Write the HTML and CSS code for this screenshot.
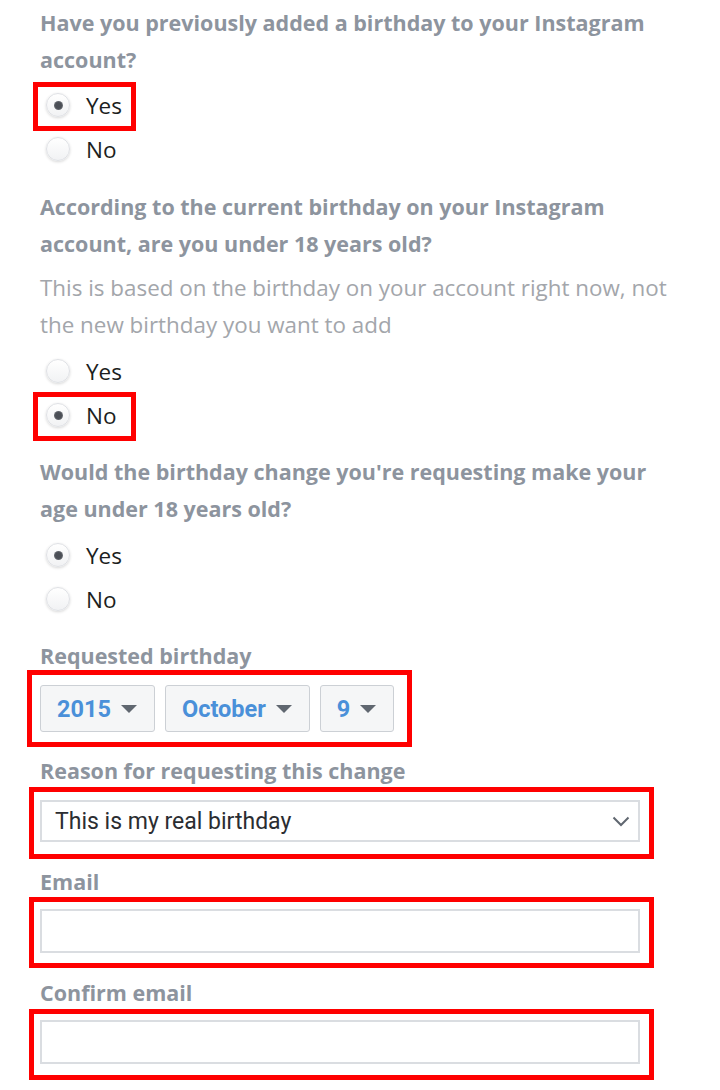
FILE: index.html
```html
<!DOCTYPE html>
<html lang="en">
<head>
<meta charset="utf-8">
<title>Birthday change request</title>
<link rel="stylesheet" href="styles.css">
</head>
<body>
<main class="form">
  <p class="question q1">Have you previously added a birthday to your Instagram account?</p>
  <div class="radios radios-first">
    <div class="radio-row hl-radio"><span class="radio checked"></span><span class="radio-label">Yes</span></div>
    <div class="radio-row"><span class="radio"></span><span class="radio-label">No</span></div>
  </div>

  <p class="question q2">According to the current birthday on your Instagram account, are you under 18 years old?</p>
  <p class="helper">This is based on the birthday on your account right now, not the new birthday you want to add</p>
  <div class="radios">
    <div class="radio-row"><span class="radio"></span><span class="radio-label">Yes</span></div>
    <div class="radio-row hl-radio"><span class="radio checked"></span><span class="radio-label">No</span></div>
  </div>

  <p class="question q3">Would the birthday change you're requesting make your age under 18 years old?</p>
  <div class="radios">
    <div class="radio-row"><span class="radio checked"></span><span class="radio-label">Yes</span></div>
    <div class="radio-row"><span class="radio"></span><span class="radio-label">No</span></div>
  </div>

  <p class="label label-first">Requested birthday</p>
  <div class="date-row hl-date">
    <div class="date-select"><span>2015</span><i class="tri"></i></div>
    <div class="date-select"><span>October</span><i class="tri"></i></div>
    <div class="date-select"><span>9</span><i class="tri"></i></div>
  </div>

  <p class="label label-reason">Reason for requesting this change</p>
  <div class="select hl-wide">
    <span>This is my real birthday</span>
    <svg class="chev" width="18" height="11" viewBox="0 0 18 11"><path d="M1.5 1.5 L9 9 L16.5 1.5" fill="none" stroke="#606770" stroke-width="2"/></svg>
  </div>

  <p class="label label-field">Email</p>
  <div class="input hl-wide"></div>

  <p class="label label-field">Confirm email</p>
  <div class="input hl-wide hl-last"></div>
</main>
</body>
</html>
```

FILE: styles.css
```css
html, body {
  margin: 0;
  padding: 0;
  background: #ffffff;
}

.form {
  padding: 4px 0 26px 40px;
  width: 636px;
  font-family: "Open Sans", Lato, sans-serif;
}

.question, .label {
  margin: 0;
  font-weight: 700;
  font-size: 21.5px;
  line-height: 37px;
  color: #8d949e;
}

.q2 {
  margin-top: 17px;
}

.q3 {
  margin-top: 16px;
}

.helper {
  margin: 7px 0 0 0;
  font-size: 22.4px;
  line-height: 37px;
  color: #a3a6ab;
  font-weight: 400;
}

.radios {
  margin-top: 6px;
}

.radios-first {
  margin-top: 5px;
}

.radio-row {
  position: relative;
  display: flex;
  align-items: center;
  height: 44px;
}

.radio {
  box-sizing: border-box;
  width: 24px;
  height: 24px;
  margin-left: 6px;
  border-radius: 50%;
  border: 1px solid #dfe1e5;
  background: linear-gradient(#ffffff, #f1f2f4);
  box-shadow: 0 1px 3px rgba(0, 0, 0, 0.16);
  display: flex;
  align-items: center;
  justify-content: center;
}

.radio.checked::before {
  content: "";
  width: 9px;
  height: 9px;
  border-radius: 50%;
  background: radial-gradient(circle, #4b4f56 45%, #8d9096 100%);
}

.radio-label {
  margin-left: 16px;
  font-size: 22.5px;
  color: #1c1e21;
}

.hl-radio::after {
  content: "";
  position: absolute;
  box-sizing: border-box;
  left: -7px;
  top: -1px;
  width: 103px;
  height: 49px;
  border: 5px solid #ff0000;
}

.label-first {
  margin-top: 16px;
}

.label-reason {
  margin-top: 20px;
}

.label-field {
  margin-top: 21px;
}

.date-row {
  position: relative;
  display: flex;
  gap: 10px;
  margin-top: 11px;
  width: 600px;
}

.date-select {
  box-sizing: border-box;
  height: 47px;
  display: flex;
  align-items: center;
  gap: 10px;
  padding: 0 17px 0 16px;
  background: #f5f6f7;
  border: 1px solid #ccd0d5;
  border-radius: 3px;
  font-family: Roboto, "Liberation Sans", sans-serif;
  font-weight: 700;
  font-size: 23.5px;
  color: #4a90d9;
}

.tri {
  width: 0;
  height: 0;
  border-left: 8px solid transparent;
  border-right: 8px solid transparent;
  border-top: 8px solid #606770;
}

.hl-date::after {
  content: "";
  position: absolute;
  box-sizing: border-box;
  left: -13px;
  top: -15px;
  width: 385px;
  height: 77px;
  border: 5px solid #ff0000;
}

.select {
  position: relative;
  box-sizing: border-box;
  margin-top: 11px;
  height: 42px;
  width: 600px;
  display: flex;
  align-items: center;
  justify-content: space-between;
  padding: 0 8px 0 13px;
  border: 2px solid #dadde1;
  font-family: Roboto, "Liberation Sans", sans-serif;
  font-size: 23px;
  color: #2b2d31;
}

.input {
  position: relative;
  box-sizing: border-box;
  margin-top: 9px;
  height: 44px;
  width: 600px;
  border: 2px solid #dadde1;
}

.hl-wide::after {
  content: "";
  position: absolute;
  box-sizing: border-box;
  left: -13px;
  top: -15px;
  width: 625px;
  height: 72px;
  border: 5px solid #ff0000;
}

.input.hl-wide::after {
  top: -14px;
  height: 71px;
}

.input.hl-last::after {
  top: -13px;
}
```
